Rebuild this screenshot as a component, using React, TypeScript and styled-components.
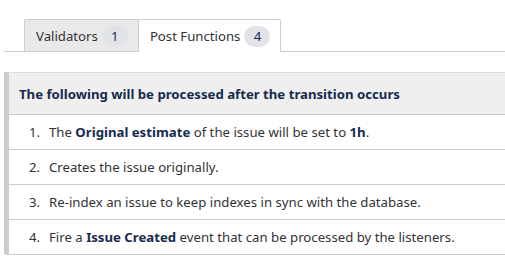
import React from 'react'
import styled, { createGlobalStyle } from 'styled-components'

const GlobalStyle = createGlobalStyle`
  body {
    margin: 0;
    background: #fff;
    font-family: 'Noto Sans', 'Open Sans', sans-serif;
    font-size: 13.2px;
    color: #333;
  }
`

const tabs = [
  { label: 'Validators', count: 1, active: false },
  { label: 'Post Functions', count: 4, active: true },
]

const steps: React.ReactNode[] = [
  <>
    The <b>Original estimate</b> of the issue will be set to <b>1h</b>.
  </>,
  <>Creates the issue originally.</>,
  <>Re-index an issue to keep indexes in sync with the database.</>,
  <>
    Fire a <b>Issue Created</b> event that can be processed by the listeners.
  </>,
]

const App = () => {
  return (
    <Page>
      <GlobalStyle />
      <TabBar>
        {tabs.map((tab) => (
          <Tab key={tab.label} $active={tab.active}>
            {tab.label}
            <Badge>{tab.count}</Badge>
          </Tab>
        ))}
      </TabBar>
      <Panel>
        <PanelHeader>The following will be processed after the transition occurs</PanelHeader>
        <StepList>
          {steps.map((step, i) => (
            <Step key={i}>
              <StepNum>{i + 1}.</StepNum>
              <span>{step}</span>
            </Step>
          ))}
        </StepList>
      </Panel>
    </Page>
  )
}

const Page = styled.div`
  padding: 19px 0 0 4px;
  overflow: hidden;
`

const TabBar = styled.div`
  display: flex;
  padding-left: 20px;
  border-bottom: 1px solid #ccc;
`

const Tab = styled.div<{ $active: boolean }>`
  display: flex;
  align-items: center;
  padding: 0 10px 0 11px;
  border: 1px solid #ccc;
  border-bottom: none;
  margin-bottom: ${(p) => (p.$active ? '-1px' : '0')};
  height: ${(p) => (p.$active ? '32px' : '31px')};
  border-left: ${(p) => (p.$active ? 'none' : '1px solid #ccc')};
  background: ${(p) => (p.$active ? '#fff' : '#e9e9e9')};
  color: #333;
  border-radius: 2px 2px 0 0;
`

const Badge = styled.span`
  display: inline-flex;
  align-items: center;
  justify-content: center;
  width: 26px;
  height: 21px;
  margin-left: 4px;
  border-radius: 11px;
  background: #e2e3e9;
  color: #172b4d;
`

const Panel = styled.div`
  margin-top: 20px;
  width: 560px;
  border-left: 5px solid #ccc;
  border-bottom-left-radius: 3px;
  border-top: 1px solid #ddd;
`

const PanelHeader = styled.div`
  display: flex;
  align-items: center;
  height: 41px;
  padding-left: 10px;
  background: #efefef;
  border-bottom: 1px solid #ccc;
  font-weight: 700;
  color: #172b4d;
`

const StepList = styled.ol`
  list-style: none;
  margin: 0;
  padding: 0;

  b {
    color: #172b4d;
  }
`

const Step = styled.li`
  display: flex;
  align-items: center;
  height: 34px;
  padding-left: 20px;
  border-bottom: 1px solid #ccc;
`

const StepNum = styled.span`
  width: 20px;
`

export default App
